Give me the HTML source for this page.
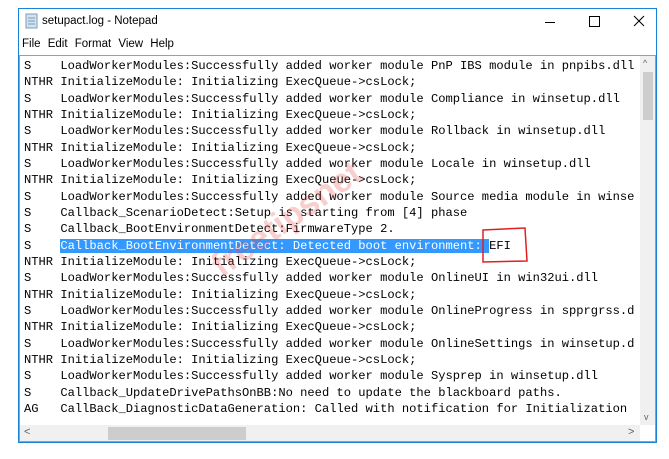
<!DOCTYPE html>
<html><head><style>
body{margin:0;width:669px;height:459px;background:#fff;position:relative;overflow:hidden;font-family:"Liberation Sans",sans-serif}
.win{position:absolute;left:18px;top:8px;width:639px;height:435px;border:1px solid #1883d7;background:#fff;box-sizing:border-box}
.title{position:absolute;left:42px;top:15px;font-size:11.5px;color:#000}
.menu{position:absolute;left:22px;top:38px;font-size:11.5px;color:#000;word-spacing:4px}
.edit{position:absolute;left:19px;top:55px;width:637px;height:387px;border:1px solid #7aa6d2;box-sizing:border-box}
.txt{position:absolute;left:24px;top:58px;font-family:"Liberation Mono",monospace;font-size:12.12px;line-height:16.33px;white-space:pre;color:#000}
.hl{background:#3399ff;color:#fff}
.vs{position:absolute;left:640px;top:56px;width:15px;height:369px;background:#f0f0f0}
.hs{position:absolute;left:20px;top:425px;width:620px;height:16px;background:#f0f0f0}
.thumb{position:absolute;left:108px;top:427px;width:138px;height:13px;background:#cdcdcd}
.vthumb{position:absolute;left:643px;top:72px;width:10px;height:48px;background:#cdcdcd}
</style></head><body>
<div class="win"></div>
<svg style="position:absolute;left:25px;top:13px" width="14" height="16"><rect x="1" y="1" width="11" height="14" fill="#cfe3f2" stroke="#7d9bb5"/><line x1="3" y1="5" x2="10" y2="5" stroke="#7d9bb5"/><line x1="3" y1="8" x2="10" y2="8" stroke="#7d9bb5"/><line x1="3" y1="11" x2="10" y2="11" stroke="#7d9bb5"/></svg>
<div class="title">setupact.log - Notepad</div>
<div style="position:absolute;left:545px;top:22px;width:10px;height:1px;background:#000"></div>
<div style="position:absolute;left:589px;top:16px;width:9px;height:9px;border:1px solid #000"></div>
<svg style="position:absolute;left:633px;top:15px" width="12" height="12"><path d="M1 1L11 11M11 1L1 11" stroke="#000"/></svg>
<div class="menu">File Edit Format View Help</div>
<div class="edit"></div>
<div class="txt">S    LoadWorkerModules:Successfully added worker module PnP IBS module in pnpibs.dll
NTHR InitializeModule: Initializing ExecQueue-&gt;csLock;
S    LoadWorkerModules:Successfully added worker module Compliance in winsetup.dll
NTHR InitializeModule: Initializing ExecQueue-&gt;csLock;
S    LoadWorkerModules:Successfully added worker module Rollback in winsetup.dll
NTHR InitializeModule: Initializing ExecQueue-&gt;csLock;
S    LoadWorkerModules:Successfully added worker module Locale in winsetup.dll
NTHR InitializeModule: Initializing ExecQueue-&gt;csLock;
S    LoadWorkerModules:Successfully added worker module Source media module in winse
S    Callback_ScenarioDetect:Setup is starting from [4] phase
S    Callback_BootEnvironmentDetect:FirmwareType 2.
S    <span class="hl">Callback_BootEnvironmentDetect: Detected boot environment: </span>EFI
NTHR InitializeModule: Initializing ExecQueue-&gt;csLock;
S    LoadWorkerModules:Successfully added worker module OnlineUI in win32ui.dll
NTHR InitializeModule: Initializing ExecQueue-&gt;csLock;
S    LoadWorkerModules:Successfully added worker module OnlineProgress in spprgrss.d
NTHR InitializeModule: Initializing ExecQueue-&gt;csLock;
S    LoadWorkerModules:Successfully added worker module OnlineSettings in winsetup.d
NTHR InitializeModule: Initializing ExecQueue-&gt;csLock;
S    LoadWorkerModules:Successfully added worker module Sysprep in winsetup.dll
S    Callback_UpdateDrivePathsOnBB:No need to update the blackboard paths.
AG   CallBack_DiagnosticDataGeneration: Called with notification for Initialization</div>
<div class="vs"></div><div class="vthumb"></div>
<div style="position:absolute;left:643px;top:58px;font-size:9px;color:#606060">^</div>
<div style="position:absolute;left:644px;top:412px;font-size:9px;color:#606060">v</div>
<div class="hs"></div><div class="thumb"></div>
<div style="position:absolute;left:24px;top:426px;font-size:11px;color:#606060">&lt;</div>
<div style="position:absolute;left:628px;top:426px;font-size:11px;color:#606060">&gt;</div>
<svg style="position:absolute;left:480px;top:226px" width="50" height="38"><path d="M3 4L45 2L47 35L3 36Z" fill="none" stroke="#e02020" stroke-width="1.5"/></svg>
<div style="position:absolute;left:200px;top:200px;transform:rotate(-35deg);font:bold 34px 'Liberation Sans',sans-serif;color:rgba(230,60,60,0.25)">freetipsnet</div>
</body></html>
